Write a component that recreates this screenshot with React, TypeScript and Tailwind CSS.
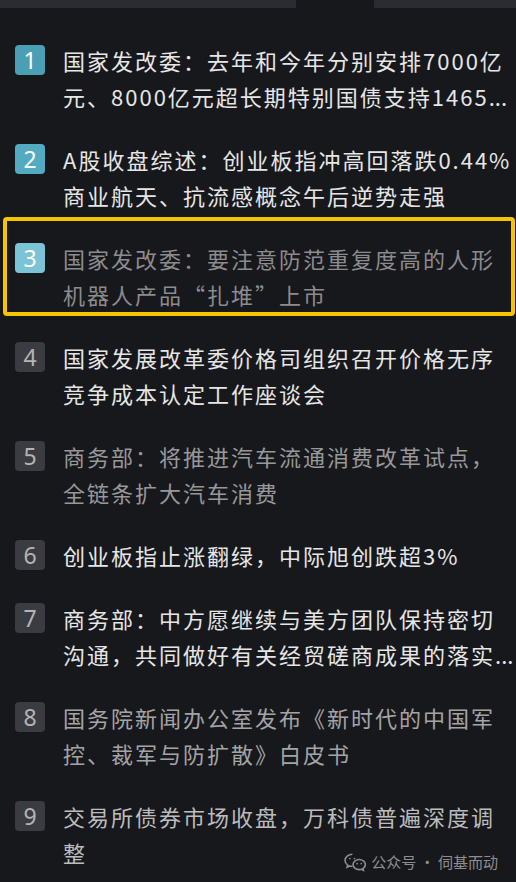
const items = [
  {
    n: 1,
    badge: 'bg-[#4a9fb4] text-white',
    text: 'text-[#e6e6e6]',
    title: '国家发改委：去年和今年分别安排7000亿元、8000亿元超长期特别国债支持1465',
    more: true,
  },
  {
    n: 2,
    badge: 'bg-[#53abc1] text-white',
    text: 'text-[#e6e6e6]',
    title: 'A股收盘综述：创业板指冲高回落跌0.44% 商业航天、抗流感概念午后逆势走强',
  },
  {
    n: 3,
    badge: 'bg-[#7cc3d6] text-white',
    text: 'text-[#8c8c8e]',
    title: '国家发改委：要注意防范重复度高的人形机器人产品“扎堆”上市',
    marked: true,
  },
  {
    n: 4,
    badge: 'bg-[#3b3c41] text-[#b4b4b6]',
    text: 'text-[#e6e6e6]',
    title: '国家发展改革委价格司组织召开价格无序竞争成本认定工作座谈会',
  },
  {
    n: 5,
    badge: 'bg-[#3b3c41] text-[#b4b4b6]',
    text: 'text-[#98989a]',
    title: '商务部：将推进汽车流通消费改革试点，全链条扩大汽车消费',
  },
  {
    n: 6,
    badge: 'bg-[#3b3c41] text-[#b4b4b6]',
    text: 'text-[#e6e6e6]',
    title: '创业板指止涨翻绿，中际旭创跌超3%',
  },
  {
    n: 7,
    badge: 'bg-[#3b3c41] text-[#b4b4b6]',
    text: 'text-[#e6e6e6]',
    title: '商务部：中方愿继续与美方团队保持密切沟通，共同做好有关经贸磋商成果的落实',
    more: true,
  },
  {
    n: 8,
    badge: 'bg-[#3b3c41] text-[#b4b4b6]',
    text: 'text-[#a4a4a6]',
    title: '国务院新闻办公室发布《新时代的中国军控、裁军与防扩散》白皮书',
  },
  {
    n: 9,
    badge: 'bg-[#3b3c41] text-[#b4b4b6]',
    text: 'text-[#bcbcbe]',
    title: '交易所债券市场收盘，万科债普遍深度调整',
  },
];

function WechatIcon() {
  return (
    <svg width="22" height="19" viewBox="0 0 21 18" fill="none" stroke="#8e8e90" strokeWidth="1.5">
      <path d="M8 1.2c-3.9 0-7 2.6-7 5.8 0 1.8 1 3.4 2.5 4.5l-.6 2 2.3-1.2c.9.3 1.8.4 2.8.4" />
      <path d="M14.5 6.2c-3.3 0-5.9 2.2-5.9 4.8s2.6 4.8 5.9 4.8c.7 0 1.4-.1 2-.3l2 1-.5-1.7c1.5-.9 2.4-2.3 2.4-3.8 0-2.6-2.6-4.8-5.9-4.8z" />
      <circle cx="5.6" cy="5.2" r=".8" fill="#8e8e90" stroke="none" />
      <circle cx="10" cy="5.2" r=".8" fill="#8e8e90" stroke="none" />
      <circle cx="12.5" cy="10" r=".8" fill="#8e8e90" stroke="none" />
      <circle cx="16.5" cy="10" r=".8" fill="#8e8e90" stroke="none" />
    </svg>
  );
}

export default function App() {
  return (
    <div
      className="relative w-full min-h-[882px] bg-[#17181c] overflow-hidden"
      style={{ fontFamily: '"Noto Sans CJK SC", "Noto Sans", sans-serif' }}
    >
      {/* tab strip remnants at the top */}
      <div className="flex h-2">
        <div className="w-[296px] bg-[#2b2c31]" />
        <div className="w-[78px]" />
        <div className="flex-1 bg-[#2b2c31]" />
      </div>

      <div className="flex flex-col gap-[27px] pt-[34px]">
        {items.map((it) => (
          <div key={it.n} className="relative flex gap-[18px] pl-[15px]">
            {it.marked && (
              <div className="absolute -top-[23px] -bottom-[4px] left-[3px] right-[1px] border-4 border-[#f7c500] rounded-[4px] pointer-events-none" />
            )}
            <div
              className={`mt-[3px] w-[30px] h-[30px] shrink-0 rounded-[4px] flex items-center justify-center text-[23px] leading-none ${it.badge}`}
              style={{ fontFamily: '"Noto Sans", sans-serif' }}
            >
              {it.n}
            </div>
            <p className={`flex-1 text-[22px] leading-[36px] tracking-[2px] ${it.text}`}>
              {it.title}
              {it.more && <span className="tracking-normal">...</span>}
            </p>
          </div>
        ))}
      </div>

      {/* watermark */}
      <div className="absolute right-[18px] bottom-[10px] flex items-center gap-[5px] text-[15px] leading-5 text-[#8e8e90]">
        <WechatIcon />
        <span>公众号 · 伺基而动</span>
      </div>
    </div>
  );
}
